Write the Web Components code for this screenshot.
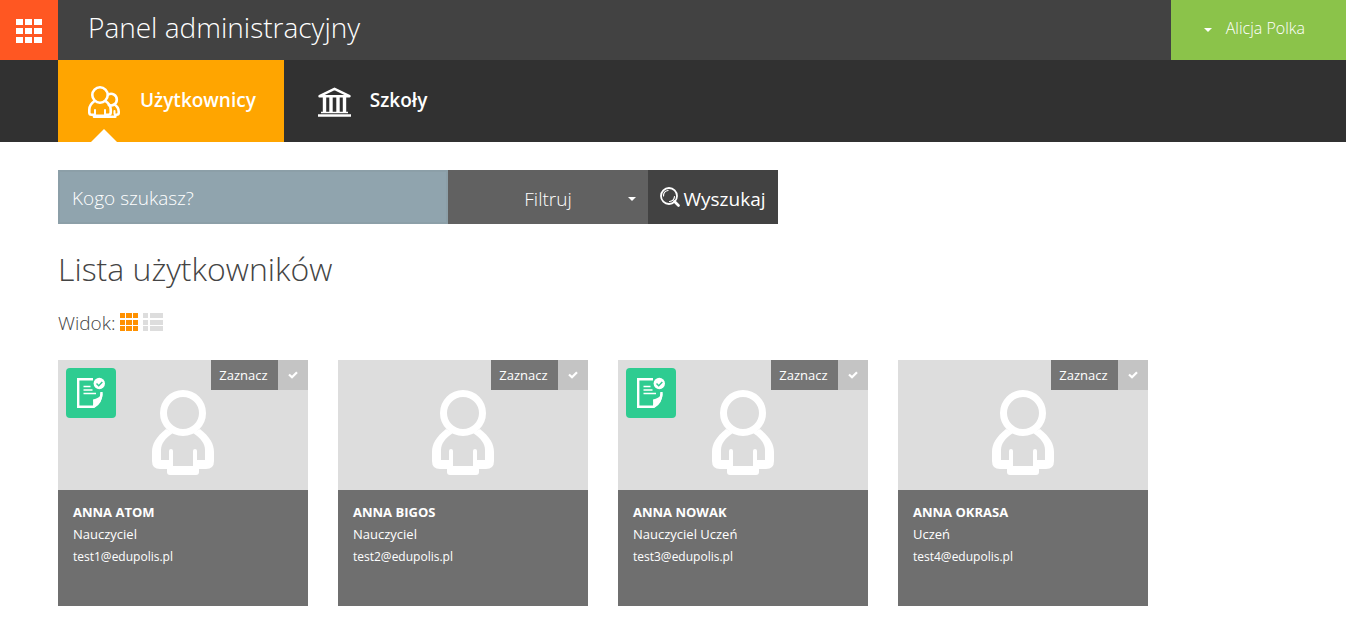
<!DOCTYPE html>
<html lang="pl">
<head>
<meta charset="utf-8">
<meta name="viewport" content="width=device-width, initial-scale=1">
<title>Panel administracyjny</title>
<style>
  body { margin: 0; background: #fff; color: #444; font-family: "Open Sans", sans-serif; }
</style>
</head>
<body>
<admin-app></admin-app>

<template id="admin-app">
  <style>
    :host { display: block; }
    main { display: flex; flex-direction: column; padding: 28px 58px 12px; }
    h1 { margin: 23px 0 0; font-size: 32px; line-height: 44px; font-weight: 300; color: #444; }
    .cards { display: flex; flex-wrap: wrap; gap: 30px; margin-top: 25px; }
  </style>
  <app-header user="Alicja Polka">Panel administracyjny</app-header>
  <app-nav>
    <nav-item active><users-icon slot="icon"></users-icon>Użytkownicy</nav-item>
    <nav-item><school-icon slot="icon"></school-icon>Szkoły</nav-item>
  </app-nav>
  <main>
    <search-bar></search-bar>
    <h1>Lista użytkowników</h1>
    <view-switch></view-switch>
    <div class="cards">
      <user-card name="ANNA ATOM" role-name="Nauczyciel" email="test1@edupolis.pl" certified></user-card>
      <user-card name="ANNA BIGOS" role-name="Nauczyciel" email="test2@edupolis.pl"></user-card>
      <user-card name="ANNA NOWAK" role-name="Nauczyciel Uczeń" email="test3@edupolis.pl" certified></user-card>
      <user-card name="ANNA OKRASA" role-name="Uczeń" email="test4@edupolis.pl"></user-card>
    </div>
  </main>
</template>

<template id="app-header">
  <style>
    :host { display: flex; height: 60px; background: #424242; color: #fff; }
    button { border: 0; padding: 0; font: inherit; color: inherit; cursor: pointer; }
    .apps { display: flex; align-items: center; justify-content: center; width: 58px; padding-top: 2px; background: #ff5722; }
    .title { flex: 1; padding-left: 30px; font-size: 28px; line-height: 54px; font-weight: 300; white-space: nowrap; }
    .user { display: flex; align-items: center; gap: 14px; padding: 0 41px 4px 33px; background: #8bc34a; font-size: 16px; font-weight: 300; white-space: nowrap; }
    .user svg { margin-top: 4px; }
  </style>
  <button class="apps" aria-label="Menu">
    <svg width="26" height="24" viewBox="0 0 26 24" fill="#fff"><path d="M0 0h7v6H0zM9 0h7v6H9zM18 0h8v6h-8zM0 9h7v6H0zM9 9h7v6H9zM18 9h8v6h-8zM0 18h7v6H0zM9 18h7v6H9zM18 18h8v6h-8z"/></svg>
  </button>
  <div class="title"><slot></slot></div>
  <button class="user">
    <svg width="8" height="4" viewBox="0 0 8 4" fill="#fff"><path d="M0 0h8L4 4z"/></svg>
    <span></span>
  </button>
</template>

<template id="app-nav">
  <style>
    :host { display: block; background: #313131; }
    nav { display: flex; padding-left: 58px; }
  </style>
  <nav><slot></slot></nav>
</template>

<template id="nav-item">
  <style>
    :host { display: block; position: relative; }
    :host([active]) { background: #ffa500; }
    :host([active])::after { content: ""; position: absolute; left: 33px; bottom: 0; border: 13px solid transparent; border-top: 0; border-bottom-color: #fff; }
    a { display: flex; align-items: center; gap: 18px; height: 82px; padding: 0 28px 0 30px; color: #fff; text-decoration: none; font-size: 19px; line-height: 24px; font-weight: 600; }
    span { padding-bottom: 2px; }
  </style>
  <a href="#"><slot name="icon"></slot><span><slot></slot></span></a>
</template>

<template id="users-icon">
  <style>:host { display: block; width: 34px; height: 32px; padding-top: 2px; } svg { display: block; }</style>
  <svg width="32" height="32" viewBox="0 0 32 32" fill="none" stroke="#fff" stroke-width="2.6" stroke-linecap="round" stroke-linejoin="round">
    <circle cx="12" cy="9" r="7.7"/>
    <path d="M6.5 15C3 17.500 1.300 20 1.300 23.500V26.500Q1.300 28.700 3.500 28.700H6V30.700H18V28.700H20.500Q22.700 28.700 22.700 26.500V23.500C22.700 20 21 17.500 17.500 15"/>
    <path d="M7 28v-4M17 28v-4M7 29.500h10" stroke-width="2"/>
    <path d="M20.500 8.400A5.800 5.800 0 1 1 20.800 19"/>
    <path d="M26.500 18.500C29.500 20.500 30.700 22.500 30.700 25.500V27Q30.700 28.700 28.500 28.700H27.300V30.700H19"/>
    <path d="M26.500 28v-3" stroke-width="2"/>
  </svg>
</template>

<template id="school-icon">
  <style>:host { display: block; width: 38px; height: 30px; padding-top: 2px; } svg { display: block; margin: 0 4px; }</style>
  <svg width="33" height="30" viewBox="0 0 33 30" fill="none" stroke="#fff">
    <path d="M1.500 9.200L16.500 1.800L31.500 9.200z" stroke-width="2.400" stroke-linejoin="round"/>
    <path d="M6.500 10v16M13 10v16M20 10v16M26.500 10v16" stroke-width="3.400"/>
    <path d="M3 25.500h27" stroke-width="1.500"/>
    <path d="M0 28.500h33" stroke-width="2.600"/>
  </svg>
</template>

<template id="search-bar">
  <style>
    :host { display: block; max-width: 720px; }
    form { display: flex; height: 54px; }
    input { flex: 1; min-width: 0; box-sizing: border-box; border: 2px solid #8c9fa8; padding: 2px 12px 0; border-radius: 0; background: #90a4ae; color: #fff; font: 300 19px "Open Sans", sans-serif; outline: 0; }
    input::placeholder { color: #fff; opacity: 1; }
    button { border: 0; border-radius: 0; color: #fff; font: 300 19px "Open Sans", sans-serif; cursor: pointer; }
    .filter { display: grid; grid-template-columns: 1fr 8px; align-items: center; width: 200px; padding: 4px 12px 0 20px; background: #616161; }
    .filter span { text-align: center; }
    .go { display: flex; align-items: center; justify-content: center; gap: 3px; width: 130px; padding: 4px 0 0; background: #424242; font-weight: 400; }
    .go svg { margin-bottom: 4px; }
  </style>
  <form>
    <input type="search" placeholder="Kogo szukasz?" aria-label="Kogo szukasz?">
    <button type="button" class="filter"><span>Filtruj</span><svg width="8" height="4" viewBox="0 0 8 4" fill="#fff"><path d="M0 0h8L4 4z"/></svg></button>
    <button type="button" class="go">
      <svg width="20" height="20" viewBox="0 0 20 20" fill="none" stroke="#fff" stroke-linecap="round"><circle cx="9" cy="9" r="8" stroke-width="1.800"/><path d="M3.500 9A5.500 5.500 0 0 1 8 3.500M14.500 9.500A5.500 5.500 0 0 1 9.500 14.500" stroke-width="1.200"/><path d="M14.500 14.500L18.500 18.500" stroke-width="2.600"/></svg>
      <span>Wyszukaj</span>
    </button>
  </form>
</template>

<template id="view-switch">
  <style>
    :host { display: flex; align-items: center; gap: 5px; height: 24px; margin-top: 20px; font-size: 19px; line-height: 24px; font-weight: 300; color: #444; }
    button { border: 0; padding: 0 0 2px; background: none; cursor: pointer; }
    svg { display: block; }
  </style>
  <span>Widok:</span>
  <button aria-label="Siatka"><svg width="18" height="18" viewBox="0 0 18 18" fill="#ff9100"><path d="M0 0h5v5H0zM6 0h6v5H6zM13 0h5v5h-5zM0 7h5v5H0zM6 7h6v5H6zM13 7h5v5h-5zM0 13h5v5H0zM6 13h6v5H6zM13 13h5v5h-5z"/></svg></button>
  <button aria-label="Lista"><svg width="20" height="18" viewBox="0 0 20 18" fill="#ddd"><path d="M0 0h5v5H0zM7 0h13v5H7zM0 7h5v5H0zM7 7h13v5H7zM0 13h5v5H0zM7 13h13v5H7z"/></svg></button>
</template>

<template id="user-card">
  <style>
    :host { display: block; width: 250px; background: #6f6f6f; color: #fff; font-size: 13px; line-height: 22px; }
    .photo { position: relative; display: flex; justify-content: center; align-items: flex-end; height: 130px; background: #ddd; }
    .person { display: block; margin-bottom: 15px; }
    .badge { display: none; position: absolute; left: 8px; top: 8px; }
    :host([certified]) .badge { display: block; }
    label { position: absolute; top: 0; right: 0; display: grid; grid-template-columns: 67px 30px; height: 30px; line-height: 30px; text-align: center; cursor: pointer; }
    label span { background: #757575; padding-right: 2px; }
    input { appearance: none; grid-area: 1 / 2; margin: 0; background: #c4c4c4; }
    .check { grid-area: 1 / 2; place-self: center; }
    .info { min-height: 94px; padding: 11px 15px; }
    p { margin: 0; }
    .name { font-weight: 700; }
    .email { font-size: 12px; line-height: 24px; }
  </style>
  <div class="photo">
    <svg class="person" width="62" height="85" viewBox="0 0 62 85" fill="#fff">
      <circle cx="31" cy="23" r="19.500" fill="none" stroke="#fff" stroke-width="7"/>
      <path d="M14 39C4 47 0 54 0 62V71Q0 79 8 79H15V82Q15 85 18 85H44Q47 85 47 82V79H54Q62 79 62 71V62C62 54 58 47 48 39L41 43C49 48 53 54 53 60V70H45V61a2 2 0 0 0-4 0V76H21V61a2 2 0 0 0-4 0V70H9V60C9 54 13 48 21 43z"/>
    </svg>
    <svg class="badge" width="50" height="50" viewBox="0 0 50 50">
      <rect width="50" height="50" rx="4" fill="#2ecc91"/>
      <path d="M27 11.200H12.200V38.800H28C33 36 35.500 31.500 35.500 24" fill="none" stroke="#fff" stroke-width="2.400"/>
      <path d="M26.500 40C27.500 36 27 33.500 27 31.500C31 31 34 29 36.700 25C36.500 32 33 37.500 26.500 40z" fill="#fff"/>
      <path d="M17.500 18.500h7M17.500 22h9M17.500 25.500h12.500" stroke="#fff" stroke-width="1.400"/>
      <circle cx="33.300" cy="15.500" r="5.700" fill="#fff"/>
      <path d="M30.500 15.500l2.200 2.200 3.600-3.800" fill="none" stroke="#2ecc91" stroke-width="1.500"/>
    </svg>
    <label><span>Zaznacz</span><input type="checkbox"><svg class="check" width="10" height="8" viewBox="0 0 10 8" fill="none" stroke="#fff" stroke-width="2.200"><path d="M1 3.500L4 6.300L9 1.200"/></svg></label>
  </div>
  <div class="info"><p class="name"></p><p class="role"></p><p class="email"></p></div>
</template>

<script>
  class TemplateElement extends HTMLElement {
    constructor() {
      super();
      const template = document.getElementById(this.localName);
      this.attachShadow({ mode: "open" }).append(template.content.cloneNode(true));
    }
    setText(selector, attribute) {
      this.shadowRoot.querySelector(selector).textContent = this.getAttribute(attribute);
    }
  }

  class AppHeader extends TemplateElement {
    connectedCallback() { this.setText(".user span", "user"); }
  }

  class UserCard extends TemplateElement {
    connectedCallback() {
      this.setText(".name", "name");
      this.setText(".role", "role-name");
      this.setText(".email", "email");
    }
  }

  customElements.define("app-header", AppHeader);
  customElements.define("user-card", UserCard);
  for (const name of ["app-nav", "nav-item", "users-icon", "school-icon", "search-bar", "view-switch", "admin-app"]) {
    customElements.define(name, class extends TemplateElement {});
  }
</script>
</body>
</html>
